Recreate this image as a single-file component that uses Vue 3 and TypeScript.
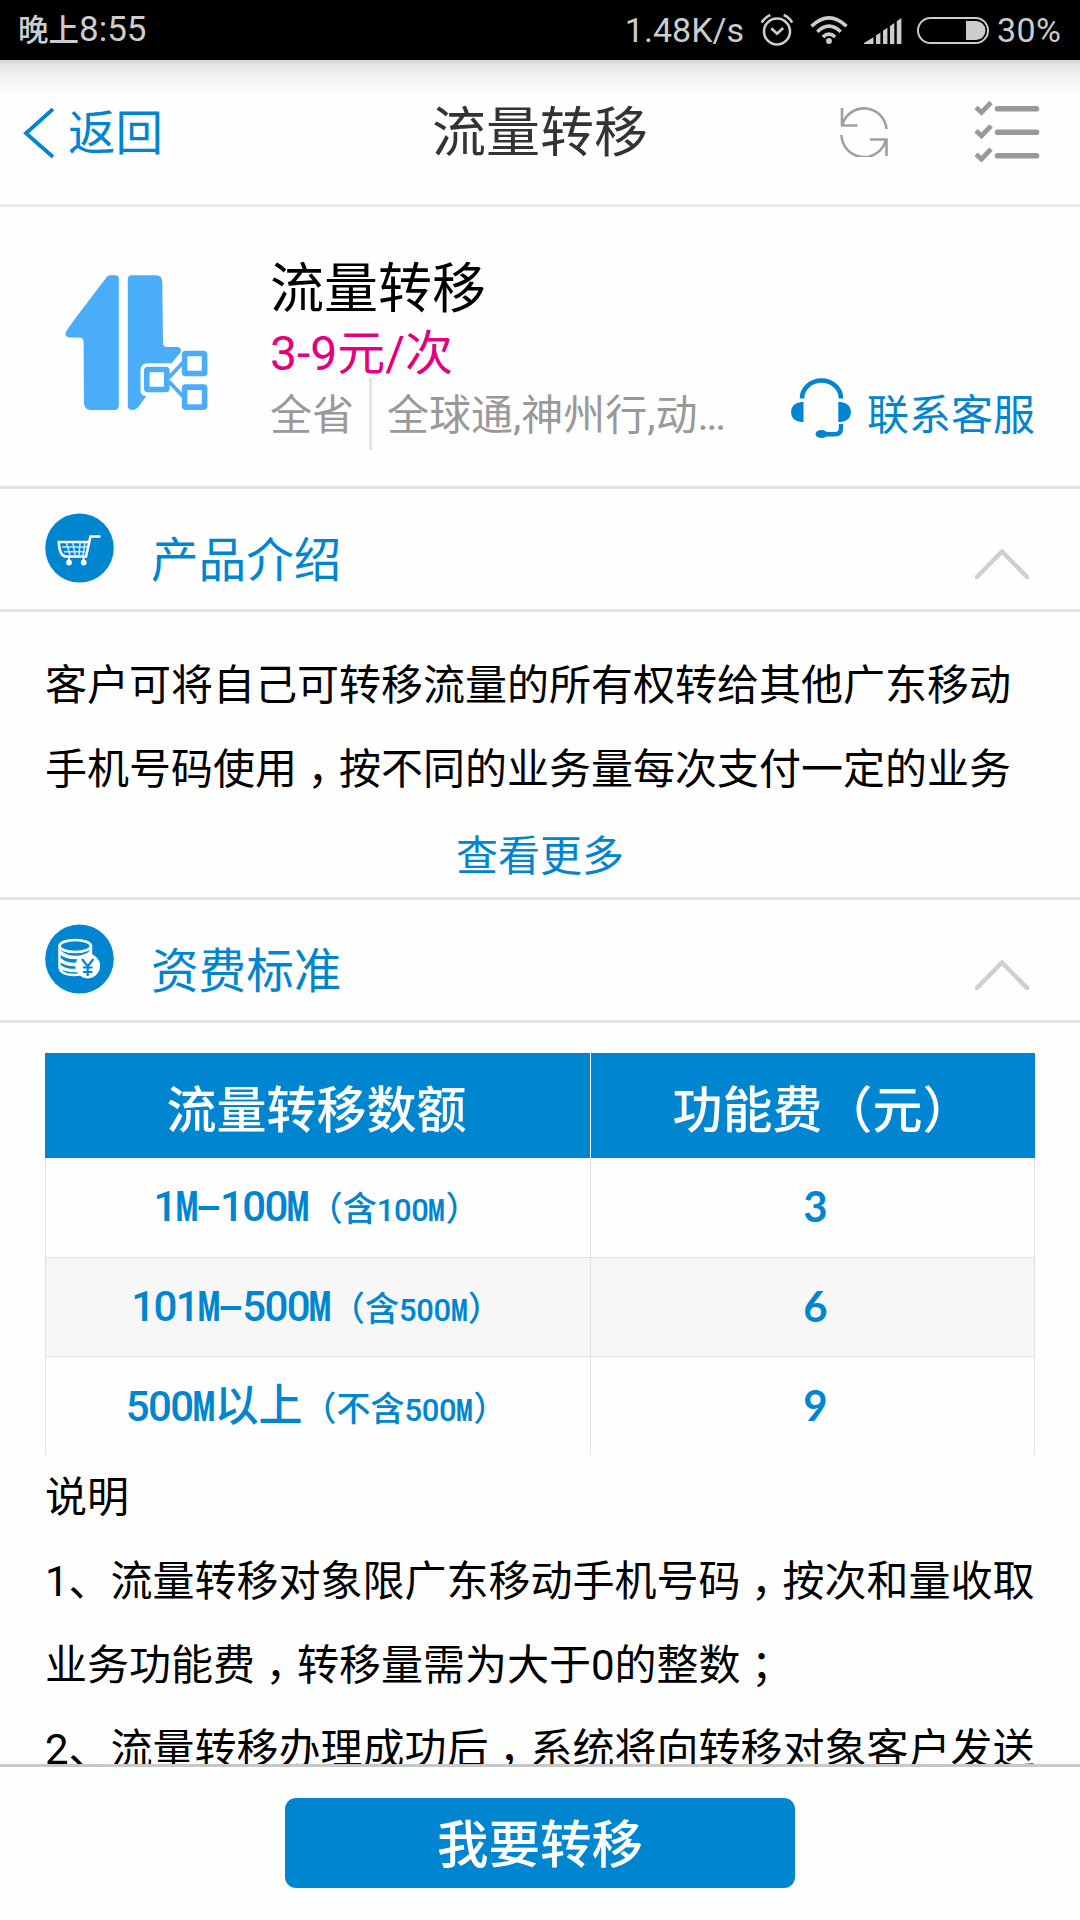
<script setup lang="ts">
interface FeeRow {
  range: string
  note: string
  fee: string
}

const rows: FeeRow[] = [
  { range: '1M-100M', note: '（含100M）', fee: '3' },
  { range: '101M-500M', note: '（含500M）', fee: '6' },
  { range: '500M以上', note: '（不含500M）', fee: '9' },
]

const introLines: string[] = [
  '客户可将自己可转移流量的所有权转给其他广东移动',
  '手机号码使用，按不同的业务量每次支付一定的业务',
]

const noteLines: string[] = [
  '说明',
  '1、流量转移对象限广东移动手机号码，按次和量收取',
  '业务功能费，转移量需为大于0的整数；',
  '2、流量转移办理成功后，系统将向转移对象客户发送',
]

// Full-width commas and semicolons sit in the middle of their cell.
const splitMarks = (line: string): string[] => line.split(/([，；])/).filter(Boolean)
const isMark = (part: string): boolean => part === '，' || part === '；'

const splitFigures = (text: string): string[] => text.split(/([M-]|\d+)/).filter(Boolean)
const figureClass = (part: string): string => {
  if (part === 'M') return 'fig-m'
  if (part === '-') return 'fig-dash'
  return /^\d+$/.test(part) ? 'fig-num' : 'fig-cjk'
}
</script>

<template>
  <div class="screen">
    <div class="status">
      <div class="clock"><span class="period">晚上</span>8:55</div>
      <div class="status-right">
        <span class="speed">1.48K/s</span>
        <svg class="alarm" width="34" height="34" viewBox="0 0 34 34" fill="none" stroke="#cccccc">
          <circle cx="17" cy="18.5" r="13" stroke-width="2.6" />
          <path d="M11.3 15.3 L17 20.7 L23.2 15" stroke-width="2.8" />
          <path d="M1.8 9.6 Q4.5 4.6 10.3 2 M32.200 9.600 Q29.500 4.600 23.700 2" stroke-width="2.600" />
        </svg>
        <svg class="wifi" width="38" height="30" viewBox="0 0 38 30" fill="none" stroke="#cccccc" stroke-width="3.6">
          <path d="M1.500 11.300 Q19 -5.600 36.500 11.300" />
          <path d="M7.300 16.700 Q19 5.400 30.700 16.700" />
          <path d="M12.900 22 Q19 16.300 25.100 22" />
          <circle cx="19" cy="26" r="2.900" fill="#cccccc" stroke="none" />
        </svg>
        <svg class="signal" width="38" height="26" viewBox="0 0 38 26" fill="#cccccc">
          <path d="M0 26 L0 25 L9.500 19.300 V26 Z M12 17.500 L16.400 14.500 V26 H12 Z M19 12.800 L23.400 9.800 V26 H19 Z M26 8 L30.300 5 V26 H26 Z M32.800 3.200 L37.400 0 V26 H32.800 Z" />
        </svg>
        <svg class="battery" width="72" height="27" viewBox="0 0 72 27">
          <rect x="1" y="1" width="70" height="25" rx="12.500" fill="none" stroke="#cccccc" stroke-width="2" />
          <path d="M49 4 H59 A9.500 9.500 0 0 1 59 23 H49 Z" fill="#cccccc" />
        </svg>
        <span class="percent">30%</span>
      </div>
    </div>

    <header class="nav">
      <div class="back">
        <svg width="32" height="50" viewBox="0 0 32 50" fill="none" stroke="#0085d0" stroke-width="3.800">
          <path d="M30 1 L3 25.300 L30 49" />
        </svg>
        <span>返回</span>
      </div>
      <h1>流量转移</h1>
      <div class="tools">
        <svg width="50" height="50" viewBox="0 0 50 50" fill="none" stroke="#9f9f9f" stroke-width="2.600">
          <path d="M3 1 V18.500 H18.500" />
          <path d="M3.500 17.500 A22.500 22.500 0 0 1 47.500 22" />
          <path d="M47.500 49 V32.500 H31" />
          <path d="M46.700 33.500 A22.500 22.500 0 0 1 2.500 28" />
        </svg>
        <svg width="66" height="62" viewBox="0 0 66 62" fill="none" stroke="#999999">
          <path d="M2 6.500 L7.500 11.500 L17 1.500 M2 29.800 L7.500 34.800 L17 24.800 M2 53.200 L7.500 58.200 L17 48.200" stroke-width="4.800" />
          <path d="M23.500 7.700 H62.500 M23.500 31.300 H62.500 M23.500 54.800 H62.500" stroke-width="5.600" stroke-linecap="round" />
        </svg>
      </div>
    </header>

    <main class="content">
      <section class="product">
        <svg class="logo" width="143" height="136" viewBox="0 0 143 136">
          <g fill="#4aadfa">
            <path d="M44.500 .3 H50 Q53.800 .3 53.800 4 V130.500 Q53.500 135 49.500 135 H25 Q19 134.500 18.900 127 L18.600 67 Q18.500 62.500 14 62.500 H4 Q-1.500 61 1.500 56 Q3 52.500 41 3 Q42.500 .5 44.500 .3 Z" />
            <path d="M66.500 .3 H91.500 Q97 .5 97.300 7 L98 68 Q98.200 72 102 72 H112 Q117.500 72.500 115.500 77.500 L106.500 88.300 H83 Q76 88.300 75.500 95 V115 Q75.500 121 81.300 121 L73 132.500 Q70 135.200 67 135 Q62.800 134.500 62.800 131 V4 Q63 .5 66.500 .3 Z" />
          </g>
          <path d="M103 103 L119 86 M103 106 L119 123" fill="none" stroke="#fefefe" stroke-width="11" />
          <g fill="#fefefe" stroke="#4aadfa" stroke-width="5.600">
            <path d="M104 102.500 L118 87.500 M104 106.500 L118 121.500" stroke-width="3.800" />
            <rect x="81.800" y="94.500" width="20" height="20" rx="1" />
            <rect x="119.600" y="78.500" width="20" height="20" rx="1" />
            <rect x="119.600" y="112.100" width="20" height="20" rx="1" />
          </g>
        </svg>
        <div class="info">
          <h2>流量转移</h2>
          <div class="price">3-9元/次</div>
          <div class="meta">
            <span class="area">全省</span>
            <span class="brands">全球通,神州行,动<span class="dots">...</span></span>
          </div>
        </div>
        <div class="service">
          <svg width="60" height="60" viewBox="0 0 60 60" fill="#0085d0">
            <path d="M11 20.500 A19.500 18 0 0 1 50 20.500" fill="none" stroke="#0085d0" stroke-width="4.600" />
            <path d="M12.500 24 V44 H10 Q0 42.500 0 34 Q0 25.500 10 24 Z M47.300 24 V44 H50 Q60 42.500 60 34 Q60 25.500 50 24 Z" />
            <path d="M50 46 V50 Q50 56.300 44 56.300 H33" fill="none" stroke="#0085d0" stroke-width="4.400" />
            <ellipse cx="30.500" cy="56" rx="6" ry="4" />
          </svg>
          <span>联系客服</span>
        </div>
      </section>

      <div class="section-head">
        <svg class="badge" width="69" height="70" viewBox="0 0 69 70" fill="none" stroke="#ffffff">
          <ellipse cx="34.500" cy="35" rx="34.300" ry="34.600" fill="#0085d0" stroke="none" />
          <path d="M43.500 29 H13.800 Q14.500 43.500 21 43.500 H41 L45.500 23.500 H55.500" stroke-width="2.600" />
          <path d="M17 34 H42 M19 38.800 H40.500 M21.500 30 L25 42 M28 30 L30 42 M35 30 L34 42 M40 30 L38 42" stroke-width="1.600" opacity=".8" />
          <path d="M24 44 V48 M38.500 44 V48" stroke-width="2" />
          <circle cx="24" cy="49.500" r="2.900" fill="#ffffff" stroke="none" />
          <circle cx="38.700" cy="49.500" r="2.900" fill="#ffffff" stroke="none" />
        </svg>
        <h3>产品介绍</h3>
        <svg class="fold" width="54" height="30" viewBox="0 0 54 30" fill="none" stroke="#cfcfcf" stroke-width="4.400">
          <path d="M-1 31 L27 2.500 L55 31" />
        </svg>
      </div>

      <div class="intro">
        <p v-for="line in introLines" :key="line" class="line">
          <span v-for="(part, i) in splitMarks(line)" :key="i" :class="{ mark: isMark(part) }">{{ part }}</span>
        </p>
        <div class="more">查看更多</div>
      </div>

      <div class="section-head">
        <svg class="badge" width="69" height="70" viewBox="0 0 69 70" fill="none" stroke="#ffffff">
          <ellipse cx="34.500" cy="35" rx="34.300" ry="34.600" fill="#0085d0" stroke="none" />
          <path d="M14.500 21 V44 Q16 51 30 51 Q46 50 46 44 V21" stroke-width="2.400" />
          <ellipse cx="30.200" cy="22" rx="15.700" ry="6" stroke-width="2.600" />
          <path d="M15 28 Q20 33.500 31 33.500 Q41 33.500 46 28 M15 35.500 Q20 41 32 40.500 M15 42.500 Q20 47 32 46.500" stroke-width="3.400" />
          <circle cx="42.700" cy="42" r="12" fill="#ffffff" stroke="#ffffff" stroke-width="1" />
          <path d="M37 35 L42.700 42.500 L48.400 35 M42.700 42 V52 M38 43.500 H47.500 M38 48 H47.500" stroke="#0085d0" stroke-width="2.200" />
        </svg>
        <h3>资费标准</h3>
        <svg class="fold" width="54" height="30" viewBox="0 0 54 30" fill="none" stroke="#cfcfcf" stroke-width="4.400">
          <path d="M-1 31 L27 2.500 L55 31" />
        </svg>
      </div>

      <div class="tariff">
        <div class="table">
          <div class="tr th">
            <div class="td">流量转移数额</div>
            <div class="td fee-head">功能费（元）</div>
          </div>
          <div v-for="row in rows" :key="row.range" class="tr">
            <div class="td range">
              <span class="big"><span v-for="(p, i) in splitFigures(row.range)" :key="i" :class="figureClass(p)">{{ p }}</span></span><span class="small"><span v-for="(p, i) in splitFigures(row.note)" :key="i" :class="figureClass(p)">{{ p }}</span></span>
            </div>
            <div class="td fee">{{ row.fee }}</div>
          </div>
        </div>
        <p v-for="line in noteLines" :key="line" class="line">
          <span v-for="(part, i) in splitMarks(line)" :key="i" :class="{ mark: isMark(part) }">{{ part }}</span>
        </p>
      </div>
    </main>

    <footer class="footer">
      <button type="button">我要转移</button>
    </footer>
  </div>
</template>

<style>
body {
  margin: 0;
  background: #fefefe;
}
</style>

<style scoped>
.screen {
  box-sizing: border-box;
  width: 1080px;
  height: 1920px;
  overflow: hidden;
  display: flex;
  flex-direction: column;
  background: #fefefe;
  color: #000;
  font-family: Roboto, 'Noto Sans CJK SC', sans-serif;
}

h1, h2, h3, p {
  margin: 0;
  font-weight: 400;
}

svg {
  display: block;
  flex: none;
}

.status {
  box-sizing: border-box;
  flex: none;
  height: 60px;
  padding: 0 19px 0 18px;
  display: flex;
  justify-content: space-between;
  background: #000;
  color: #ccc;
  font-size: 34px;
  line-height: 60px;
  white-space: nowrap;
}

.clock {
  font-size: 35px;
}

.period {
  font-size: 30.5px;
  font-weight: 500;
}

.status-right {
  display: flex;
  align-items: center;
}

.percent { letter-spacing: .4px; margin-right: -.4px; }
.alarm { margin: 0 0 0 16px; }
.wifi { margin: 0 0 0 16px; }
.signal { margin: 1px 0 0 16px; }
.battery { margin: 1px 8px 0 15px; }

.nav {
  box-sizing: border-box;
  flex: none;
  height: 147px;
  border-top: 3px solid #d9d9d9;
  border-bottom: 3px solid #ebebeb;
  background: linear-gradient(#e2e2e2 0, #f0f0f0 12px, #fafafa 26px, #fefefe 38px);
  display: grid;
  grid-template-columns: 1fr auto 1fr;
  align-items: center;
}

.back {
  display: flex;
  align-items: center;
  gap: 13px;
  padding-left: 23px;
  color: #0085d0;
  font-size: 47.5px;
  line-height: 60px;
}

.back svg {
  margin-bottom: 2px;
}

.back span {
  padding-top: 1px;
}

.nav h1 {
  padding-top: 1px;
  font-size: 54px;
  line-height: 70px;
  color: #333;
}

.tools {
  display: flex;
  align-items: center;
  justify-content: flex-end;
  gap: 85px;
  padding: 0 40px 4px 0;
}

.content {
  flex: 1;
  min-height: 0;
  overflow: hidden;
}

.product {
  box-sizing: border-box;
  height: 282px;
  border-bottom: 3px solid #e4e4e4;
  padding: 48px 45px 0 65px;
  display: flex;
  align-items: flex-start;
}

.logo {
  margin-top: 20px;
}

.info {
  margin-left: 62px;
  flex: 1;
}

.info h2 {
  font-size: 54px;
  line-height: 69px;
  height: 68px;
}

.price {
  height: 55px;
  font-size: 48px;
  line-height: 61px;
  color: #e4007f;
}

.meta {
  display: flex;
  font-size: 42px;
  line-height: 75px;
  height: 72px;
  color: #999;
  white-space: nowrap;
}

.area {
  padding-right: 15px;
  border-right: 3px solid #e4e4e4;
}

.brands {
  padding-left: 15px;
}

.dots {
  letter-spacing: -2.2px;
}

.service {
  display: flex;
  gap: 16px;
  margin-top: 123px;
  color: #0085d0;
  font-size: 42px;
  line-height: 75px;
}

.section-head {
  box-sizing: border-box;
  height: 123px;
  border-bottom: 3px solid #e4e4e4;
  padding: 0 51px 0 45px;
  display: flex;
}

.badge {
  margin-top: 24px;
}

.section-head h3 {
  flex: 1;
  margin: 42px 0 0 37px;
  font-size: 47.6px;
  line-height: 60px;
  color: #0085d0;
}

.fold {
  margin-top: 60px;
}

.intro {
  box-sizing: border-box;
  height: 288px;
  border-bottom: 3px solid #e4e4e4;
  padding: 32px 45px 0;
}

.line {
  font-size: 42px;
  line-height: 84px;
  height: 84px;
  white-space: nowrap;
}

.mark {
  display: inline-block;
  width: 1em;
  text-align: center;
  font-feature-settings: 'halt';
}

.more {
  text-align: center;
  font-size: 42px;
  line-height: 90px;
  color: #0085d0;
}

.tariff {
  padding: 30px 45px 0;
}

.table {
  height: 402px;
  margin-bottom: 1px;
  color: #0085d0;
}

.tr {
  display: grid;
  grid-template-columns: 546px 444px;
  height: 99px;
}

.tr.th {
  height: 105px;
  background: #0085d0;
  color: #fff;
  font-size: 50px;
  font-weight: 500;
}

.tr:nth-child(2) {
  height: 100px;
}

.tr:last-child {
  height: 98px;
}

.td {
  box-sizing: border-box;
  display: flex;
  align-items: center;
  justify-content: center;
  border-right: 1px solid #e0e0e0;
  white-space: nowrap;
  line-height: 80px;
}

.th .td {
  padding-top: 10px;
}

.th .td:first-child {
  border-right-color: #fff;
  padding-right: 2px;
}

.th .td:last-child {
  border-right: 0;
}

.td.fee-head {
  padding-left: 19px;
}

.tr:not(.th) .td {
  border-bottom: 1px solid #e0e0e0;
}

.tr:not(.th) .td:first-child {
  border-left: 1px solid #e0e0e0;
}

.tr:last-child .td.td.td {
  border-bottom: 0;
}

.tr:nth-child(3) {
  background: #f7f7f7;
}

.td.range {
  align-items: baseline;
  padding: 9px 3px 0 0;
  font-weight: 500;
}

.big { font-size: 42px; }
.small { font-size: 31px; }
.big, .small { display: inline-flex; align-items: baseline; }
.big .fig-cjk { font-size: 44px; }
.small .fig-cjk { font-size: 34px; }
.fig-num { letter-spacing: -1.6px; }
.small .fig-num { letter-spacing: -.4px; }

.fig-m,
.fig-dash {
  display: inline-flex;
  justify-content: center;
  width: 22px;
}

.small .fig-m {
  width: 17px;
}

.fig-m {
  font-weight: 900;
  transform: scaleX(.6);
}

.fig-dash {
  transform: scaleX(1.9);
}

.td.fee {
  padding: 0 0 3px 6px;
  font-family: Lato, sans-serif;
  font-size: 42px;
  font-weight: 700;
}

.footer {
  box-sizing: border-box;
  flex: none;
  height: 156px;
  border-top: 3px solid #c8c8c8;
  padding-top: 31px;
  display: flex;
  justify-content: center;
  align-items: flex-start;
}

.footer button {
  width: 510px;
  height: 90px;
  border: 0;
  border-radius: 11px;
  padding: 5px 0 0;
  background: #0085d0;
  color: #fff;
  font: 500 51.5px/85px Roboto, 'Noto Sans CJK SC', sans-serif;
}
</style>
